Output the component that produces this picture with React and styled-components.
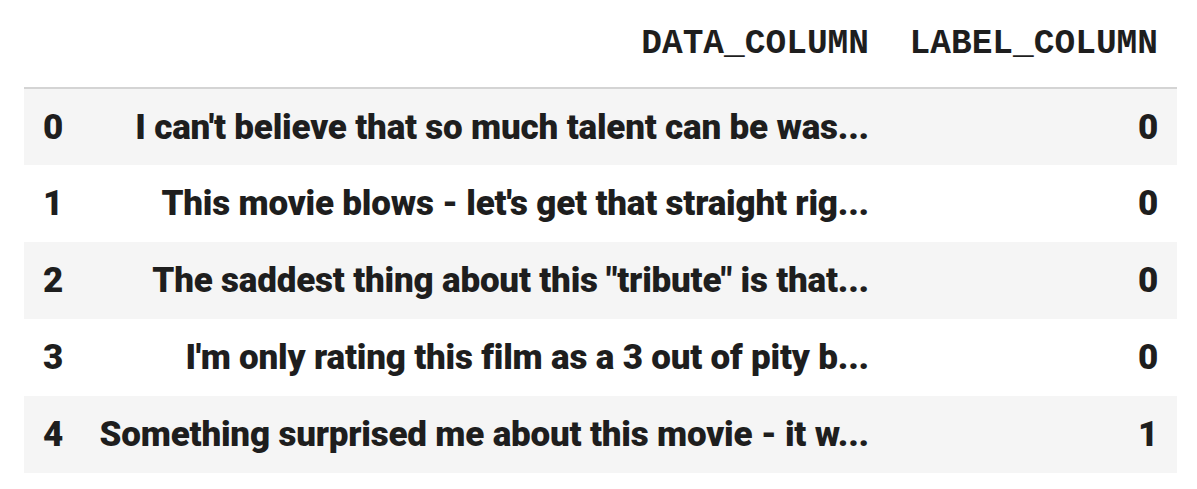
import React from 'react'
import styled, { createGlobalStyle } from 'styled-components'

const GlobalStyle = createGlobalStyle`
  body {
    margin     : 0;
    background : #ffffff;
    font-family: Roboto, "Liberation Sans", sans-serif;
  }
`

const ROWS = [
  { idx: 0, text: "I can't believe that so much talent can be was...", label: 0 },
  { idx: 1, text: "This movie blows - let's get that straight rig...", label: 0 },
  { idx: 2, text: 'The saddest thing about this "tribute" is that...', label: 0 },
  { idx: 3, text: "I'm only rating this film as a 3 out of pity b...", label: 0 },
  { idx: 4, text: 'Something surprised me about this movie - it w...', label: 1 }
]

const Wrapper = styled.div`
  padding: 0 0 0 24px;
`

const Table = styled.table`
  border-collapse: collapse;
  border-spacing : 0;
  table-layout   : fixed;
  width          : 1153px;
  color          : #1e1e1e;
`

const HeadRow = styled.tr`
  height       : 88px;
  border-bottom: 2px solid #d4d4d4;
`

const HeadCell = styled.th`
  font-family   : "Liberation Mono", "Courier New", monospace;
  font-weight   : bold;
  font-size     : 34.5px;
  text-align    : right;
  vertical-align: middle;
  padding       : 0 19px;
  white-space   : nowrap;
  width         : ${props => props.w}px;
  box-sizing    : border-box;
`

const BodyRow = styled.tr`
  height    : 77px;
  background: ${props => (props.striped ? '#f5f5f5' : '#ffffff')};
`

const Cell = styled.td`
  font-weight   : 900;
  font-size     : 35px;
  letter-spacing: -0.2px;
  text-align    : ${props => (props.left ? 'left' : 'right')};
  vertical-align: middle;
  padding       : 0 19px;
  white-space   : nowrap;
  overflow      : hidden;
`

export default function App() {
  return (
    <Wrapper>
      <GlobalStyle />
      <Table>
        <thead>
          <HeadRow>
            <HeadCell w={56} />
            <HeadCell w={808}>DATA_COLUMN</HeadCell>
            <HeadCell w={289}>LABEL_COLUMN</HeadCell>
          </HeadRow>
        </thead>
        <tbody>
          {ROWS.map(row => (
            <BodyRow key={row.idx} striped={row.idx % 2 === 0}>
              <Cell left>{row.idx}</Cell>
              <Cell>{row.text}</Cell>
              <Cell>{row.label}</Cell>
            </BodyRow>
          ))}
        </tbody>
      </Table>
    </Wrapper>
  )
}
